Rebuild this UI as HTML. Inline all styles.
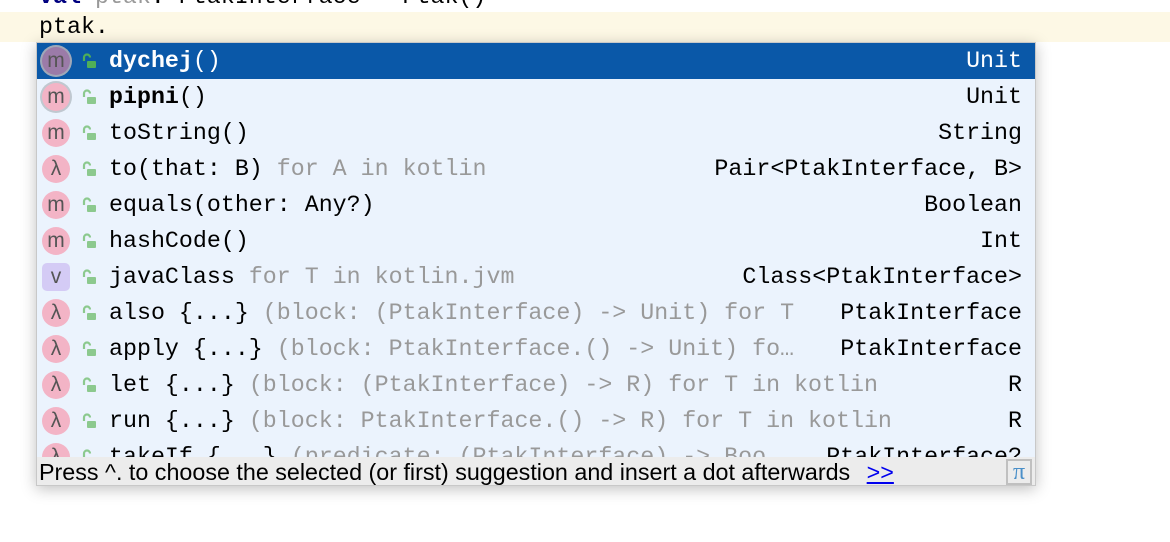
<!DOCTYPE html>
<html><head><meta charset="utf-8"><style>
body{margin:0;width:1170px;height:542px;background:#fff;position:relative;overflow:hidden;font-family:"Liberation Mono",monospace}
.band{position:absolute;left:0;top:12px;width:1170px;height:30px;background:#fdf8e5}
.code{position:absolute;left:39px;font-size:23.3px;white-space:pre;color:#000}
.pop{position:absolute;left:36px;top:42px;width:1000px;height:444px;background:#ebf3fd;box-shadow:0 3px 14px rgba(0,0,0,.25);border:1px solid #c8c8c8;box-sizing:border-box;overflow:hidden}
.row{position:absolute;left:0;width:998px;height:36px;font-size:23.3px;white-space:pre;color:#000}
.row.sel{background:#0a58a8;color:#fff}
.ic{position:absolute;left:5px;top:4px;width:28px;height:28px;border-radius:50%;background:#f3b4c6;color:#555;font-size:21px;line-height:27px;text-align:center;font-family:"Liberation Sans",sans-serif}
.ic.v{border-radius:5px;background:#d4cbf5}
.lk{position:absolute;left:44px;top:10px}
.t{position:absolute;left:72px;top:2px;line-height:32px}
.r{position:absolute;right:13px;top:2px;line-height:32px}
.g{color:#999}
.foot{position:absolute;left:0;top:414px;width:998px;height:30px;background:#ececec;font-family:"Liberation Sans",sans-serif;font-size:23.3px;line-height:30px;padding-left:2px;box-sizing:border-box;color:#000;white-space:nowrap}
.foot a{color:#0000ee;text-decoration:underline;margin-left:10px}
.pi{position:absolute;right:3px;top:2px;width:26px;height:26px;border:2px solid #c0c0c0;box-sizing:border-box;color:#4a8fc8;font-size:24px;line-height:22px;text-align:center;font-family:"Liberation Serif",serif;background:#ececec}
</style></head><body>
<div class="band"></div>
<div class="code" style="top:-16px"><b style="color:#000080">val</b> <span style="color:#999">ptak</span>: PtakInterface = Ptak()</div>
<div class="code" style="top:12px;line-height:30px">ptak.</div>
<div class="pop">
<div class="row sel" style="top:0"><span class="ic" style="background:#9b7ba8;box-shadow:0 0 0 2px #a0a8b8">m</span><svg class="lk" width="16" height="16"><path d="M3 8V4.5a3 3 0 0 1 6 0" stroke="#4fae58" stroke-width="2.2" fill="none"/><rect x="6" y="8" width="9" height="7" rx="1" fill="#4fae58"/></svg><span class="t"><b>dychej</b>()</span><span class="r">Unit</span></div>
<div class="row" style="top:36px"><span class="ic" style="box-shadow:0 0 0 2px #c0c8d0">m</span><svg class="lk" width="16" height="16"><path d="M3 8V4.5a3 3 0 0 1 6 0" stroke="#8cc98e" stroke-width="2.2" fill="none"/><rect x="6" y="8" width="9" height="7" rx="1" fill="#8cc98e"/></svg><span class="t"><b>pipni</b>()</span><span class="r">Unit</span></div>
<div class="row" style="top:72px"><span class="ic">m</span><svg class="lk" width="16" height="16"><path d="M3 8V4.5a3 3 0 0 1 6 0" stroke="#8cc98e" stroke-width="2.2" fill="none"/><rect x="6" y="8" width="9" height="7" rx="1" fill="#8cc98e"/></svg><span class="t">toString()</span><span class="r">String</span></div>
<div class="row" style="top:108px"><span class="ic">λ</span><svg class="lk" width="16" height="16"><path d="M3 8V4.5a3 3 0 0 1 6 0" stroke="#8cc98e" stroke-width="2.2" fill="none"/><rect x="6" y="8" width="9" height="7" rx="1" fill="#8cc98e"/></svg><span class="t">to(that: B) <span class="g">for A in kotlin</span></span><span class="r">Pair&lt;PtakInterface, B&gt;</span></div>
<div class="row" style="top:144px"><span class="ic">m</span><svg class="lk" width="16" height="16"><path d="M3 8V4.5a3 3 0 0 1 6 0" stroke="#8cc98e" stroke-width="2.2" fill="none"/><rect x="6" y="8" width="9" height="7" rx="1" fill="#8cc98e"/></svg><span class="t">equals(other: Any?)</span><span class="r">Boolean</span></div>
<div class="row" style="top:180px"><span class="ic">m</span><svg class="lk" width="16" height="16"><path d="M3 8V4.5a3 3 0 0 1 6 0" stroke="#8cc98e" stroke-width="2.2" fill="none"/><rect x="6" y="8" width="9" height="7" rx="1" fill="#8cc98e"/></svg><span class="t">hashCode()</span><span class="r">Int</span></div>
<div class="row" style="top:216px"><span class="ic v">v</span><svg class="lk" width="16" height="16"><path d="M3 8V4.5a3 3 0 0 1 6 0" stroke="#8cc98e" stroke-width="2.2" fill="none"/><rect x="6" y="8" width="9" height="7" rx="1" fill="#8cc98e"/></svg><span class="t">javaClass <span class="g">for T in kotlin.jvm</span></span><span class="r">Class&lt;PtakInterface&gt;</span></div>
<div class="row" style="top:252px"><span class="ic">λ</span><svg class="lk" width="16" height="16"><path d="M3 8V4.5a3 3 0 0 1 6 0" stroke="#8cc98e" stroke-width="2.2" fill="none"/><rect x="6" y="8" width="9" height="7" rx="1" fill="#8cc98e"/></svg><span class="t">also {...} <span class="g">(block: (PtakInterface) -&gt; Unit) for T</span></span><span class="r">PtakInterface</span></div>
<div class="row" style="top:288px"><span class="ic">λ</span><svg class="lk" width="16" height="16"><path d="M3 8V4.5a3 3 0 0 1 6 0" stroke="#8cc98e" stroke-width="2.2" fill="none"/><rect x="6" y="8" width="9" height="7" rx="1" fill="#8cc98e"/></svg><span class="t">apply {...} <span class="g">(block: PtakInterface.() -&gt; Unit) fo…</span></span><span class="r">PtakInterface</span></div>
<div class="row" style="top:324px"><span class="ic">λ</span><svg class="lk" width="16" height="16"><path d="M3 8V4.5a3 3 0 0 1 6 0" stroke="#8cc98e" stroke-width="2.2" fill="none"/><rect x="6" y="8" width="9" height="7" rx="1" fill="#8cc98e"/></svg><span class="t">let {...} <span class="g">(block: (PtakInterface) -&gt; R) for T in kotlin</span></span><span class="r">R</span></div>
<div class="row" style="top:360px"><span class="ic">λ</span><svg class="lk" width="16" height="16"><path d="M3 8V4.5a3 3 0 0 1 6 0" stroke="#8cc98e" stroke-width="2.2" fill="none"/><rect x="6" y="8" width="9" height="7" rx="1" fill="#8cc98e"/></svg><span class="t">run {...} <span class="g">(block: PtakInterface.() -&gt; R) for T in kotlin</span></span><span class="r">R</span></div>
<div class="row" style="top:396px"><span class="ic">λ</span><svg class="lk" width="16" height="16"><path d="M3 8V4.5a3 3 0 0 1 6 0" stroke="#8cc98e" stroke-width="2.2" fill="none"/><rect x="6" y="8" width="9" height="7" rx="1" fill="#8cc98e"/></svg><span class="t">takeIf {...} <span class="g">(predicate: (PtakInterface) -&gt; Boo…</span></span><span class="r">PtakInterface?</span></div>
<div class="foot">Press ^. to choose the selected (or first) suggestion and insert a dot afterwards <a>&gt;&gt;</a><span class="pi">π</span></div>
</div>
</body></html>
